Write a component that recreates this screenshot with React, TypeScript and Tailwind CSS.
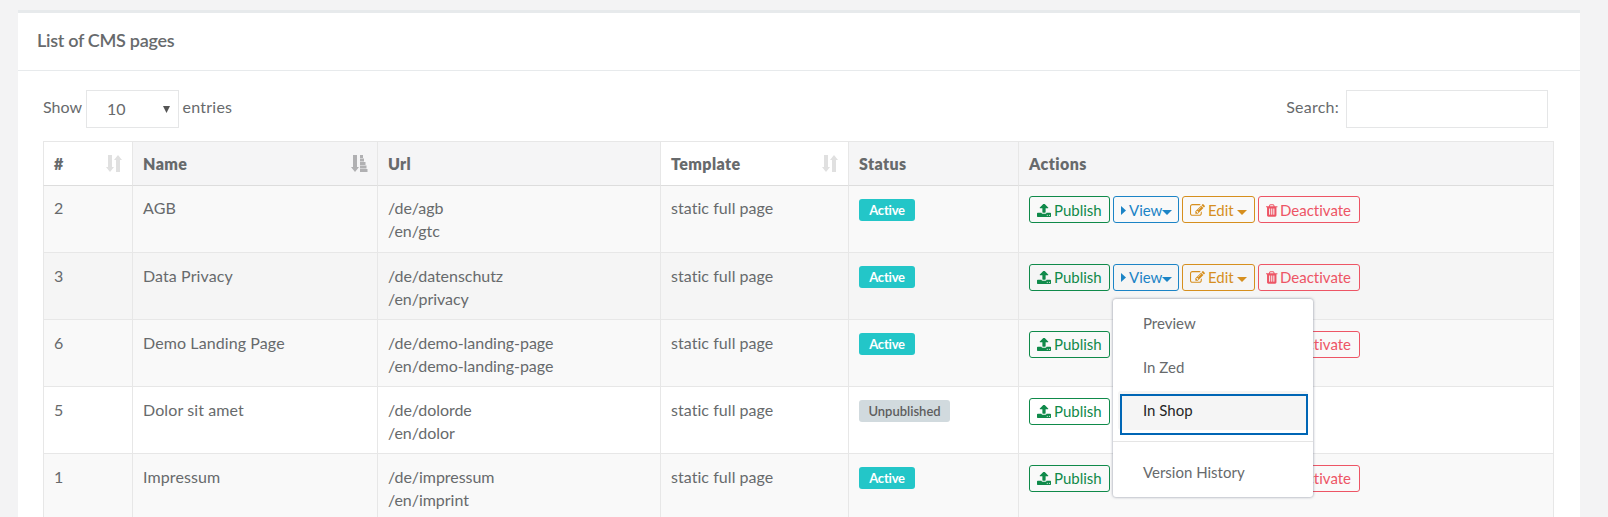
import React from "react";

const UPLOAD =
  "M1344 1472q0-26-19-45t-45-19-45 19-19 45 19 45 45 19 45-19 19-45zm256 0q0-26-19-45t-45-19-45 19-19 45 19 45 45 19 45-19 19-45zm128-224v320q0 40-28 68t-68 28h-1472q-40 0-68-28t-28-68v-320q0-40 28-68t68-28h427q21 56 70.5 92t110.5 36h256q61 0 110.5-36t70.5-92h427q40 0 68 28t28 68zm-325-648q-17 40-59 40h-256v448q0 26-19 45t-45 19h-256q-26 0-45-19t-19-45v-448h-256q-42 0-59-40-17-39 14-69l448-448q18-19 45-19t45 19l448 448q31 30 14 69z";
const PENCIL =
  "M888 1184l116-116-152-152-116 116v56h96v96h56zm440-720q-16-16-33 1l-350 350q-17 17-1 33t33-1l350-350q17-17 1-33zm80 594v190q0 119-84.5 203.5t-203.5 84.5h-832q-119 0-203.5-84.5t-84.5-203.5v-832q0-119 84.5-203.5t203.5-84.5h832q63 0 117 25 15 7 18 23 3 17-9 29l-49 49q-14 14-32 8-23-6-45-6h-832q-66 0-113 47t-47 113v832q0 66 47 113t113 47h832q66 0 113-47t47-113v-126q0-13 9-22l64-64q15-15 35-7t20 29zm-96-738l288 288-672 672h-288v-288zm444 132l-92 92-288-288 92-92q28-28 68-28t68 28l152 152q28 28 28 68t-28 68z";
const TRASH =
  "M704 1376v-704q0-14-9-23t-23-9h-64q-14 0-23 9t-9 23v704q0 14 9 23t23 9h64q14 0 23-9t9-23zm256 0v-704q0-14-9-23t-23-9h-64q-14 0-23 9t-9 23v704q0 14 9 23t23 9h64q14 0 23-9t9-23zm256 0v-704q0-14-9-23t-23-9h-64q-14 0-23 9t-9 23v704q0 14 9 23t23 9h64q14 0 23-9t9-23zm-544-992h448l-48-117q-7-9-17-11h-317q-10 2-17 11zm928 32v64q0 14-9 23t-23 9h-96v948q0 83-47 143.5t-113 60.5h-832q-66 0-113-58.5t-47-141.5v-952h-96q-14 0-23-9t-9-23v-64q0-14 9-23t23-9h309l70-167q15-37 54-63t79-26h320q40 0 79 26t54 63l70 167h309q14 0 23 9t9 23z";

function Glyph({ d, viewBox, className }: { d: string; viewBox: string; className: string }) {
  return (
    <svg viewBox={viewBox} className={`shrink-0 fill-current ${className}`}>
      <path d={d} />
    </svg>
  );
}

function CaretDown() {
  return (
    <svg viewBox="0 0 10 5" className="mt-[3px] h-[5px] w-[10px] shrink-0 fill-current">
      <path d="M0 0h10L5 5z" />
    </svg>
  );
}

function SortBoth() {
  return (
    <svg viewBox="0 0 17 17" className="h-[17px] w-[17px] fill-[#e0e0e0]">
      <path d="M2 0h4v12h2L4 17 0 12h2zM10 17h4V5h2L12 0 8 5h2z" />
    </svg>
  );
}

function SortAscending() {
  return (
    <svg viewBox="0 0 17 17" className="h-[17px] w-[17px] fill-[#b0b0b2]">
      <path d="M2 0h4v12h2L4 17 0 12h2zM9 0h3v3H9zM9 3.500h4v3H9zM9 7h5.500v3H9zM9 10.500h6.500v3H9zM9 14h7.500v3H9z" />
    </svg>
  );
}

type Header = { label: string; width: string; plain?: boolean; icon?: React.ReactNode };

const headers: Header[] = [
  { label: "#", width: "w-[90px] border-l", plain: true, icon: <SortBoth /> },
  { label: "Name", width: "w-[245px]", icon: <SortAscending /> },
  { label: "Url", width: "w-[283px]" },
  { label: "Template", width: "w-[188px]", plain: true, icon: <SortBoth /> },
  { label: "Status", width: "w-[170px]" },
  { label: "Actions", width: "w-[535px]" },
];

type Page = { id: number; name: string; urls: [string, string]; active: boolean; bg: string };

const pages: Page[] = [
  { id: 2, name: "AGB", urls: ["/de/agb", "/en/gtc"], active: true, bg: "bg-[#f9f9f9]" },
  { id: 3, name: "Data Privacy", urls: ["/de/datenschutz", "/en/privacy"], active: true, bg: "bg-[#f5f5f5]" },
  { id: 6, name: "Demo Landing Page", urls: ["/de/demo-landing-page", "/en/demo-landing-page"], active: true, bg: "bg-[#f9f9f9]" },
  { id: 5, name: "Dolor sit amet", urls: ["/de/dolorde", "/en/dolor"], active: false, bg: "bg-white" },
  { id: 1, name: "Impressum", urls: ["/de/impressum", "/en/imprint"], active: true, bg: "bg-[#f9f9f9]" },
];

function Actions({ active, first, open }: { active: boolean; first: boolean; open: boolean }) {
  const button = `flex h-[27px] items-center rounded-[3px] border pl-[7px] text-[15px] leading-none ${first ? "pt-[2px]" : "pt-0"}`;
  return (
    <div className="flex gap-[3px] whitespace-nowrap">
      <button className={`${button} w-[81px] border-[#0f8a4a] text-[#0f8a4a]`}>
        <Glyph d={UPLOAD} viewBox="64 128 1664 1536" className="mr-[3px] h-[13px] w-[14px]" />
        Publish
      </button>
      <div className="relative">
        <button className={`${button} w-[66px] border-[#1c84c6] text-[#1c84c6]`}>
          <svg viewBox="0 0 5 9" className="mr-[3px] h-[9px] w-[5px] shrink-0 fill-current">
            <path d="M0 0l5 4.500L0 9z" />
          </svg>
          View
          <CaretDown />
        </button>
        {open && <ViewMenu />}
      </div>
      <button className={`${button} w-[73px] border-[#d68f1e] text-[#d68f1e]`}>
        <Glyph d={PENCIL} viewBox="0 128 1792 1536" className="mr-[3px] h-[13px] w-[15px]" />
        Edit
        <span className="ml-[3px]">
          <CaretDown />
        </span>
      </button>
      {active && (
        <button className={`${button} w-[102px] border-[#ed5565] text-[#ed5565]`}>
          <Glyph d={TRASH} viewBox="192 128 1408 1536" className="mr-[2.500px] h-[13px] w-[11.500px]" />
          Deactivate
        </button>
      )}
    </div>
  );
}

function ViewMenu() {
  return (
    <div className="absolute top-[34.500px] left-0 z-10 h-[198px] w-[200px] rounded-[3px] bg-white text-[15px] leading-5 text-[#676a6c] shadow-[0_0_3px_rgba(86,96,117,0.7)]">
      <div className="pt-[14px] pl-[30px]">Preview</div>
      <div className="pt-6 pl-[30px]">In Zed</div>
      <div className="relative mt-[14px] mr-[5px] ml-[5px] h-[39px] rounded-[3px] bg-[#f5f5f5] pt-[9px] pl-[25px] text-[#262626]">
        In Shop
        <div className="absolute top-[3px] left-[2px] h-[41px] w-[188px] border-2 border-[#0066b5]" />
      </div>
      <div className="mt-[11px] border-t border-[#e5e5e5]" />
      <div className="pt-5 pl-[30px]">Version History</div>
    </div>
  );
}

export default function App() {
  return (
    <div className="h-[517px] overflow-hidden bg-[#f3f3f4] pt-[10px] pr-7 pl-[18px] font-['Lato',sans-serif] text-base text-[#676a6c] [font-variant-ligatures:none]">
      <section className="h-[600px] border-t-[3px] border-[#e7eaec] bg-white">
        <header className="h-[58px] border-b border-[#e7eaec] pt-[15px] pl-[19px]">
          <h1 className="text-[18px] leading-6 font-semibold tracking-[-0.3px]">List of CMS pages</h1>
        </header>
        <div className="flex h-[70px] items-start justify-between pt-[19px] pr-[32px] pl-[25px]">
          <div className="flex">
            <span className="w-[43px] pt-[5px]">Show</span>
            <div className="flex h-[38px] w-[93px] items-center justify-between border border-[#e5e6e7] pr-[8px] pl-[20px]">
              10
              <svg viewBox="0 0 7 7" className="h-[7px] w-[7px] fill-[#555]">
                <path d="M0 0h7L3.500 7z" />
              </svg>
            </div>
            <span className="pt-[5px] pl-[3.500px] tracking-[0.25px]">entries</span>
          </div>
          <label className="flex">
            <span className="pt-[5px] pr-[7px] tracking-[0.25px]">Search:</span>
            <input className="h-[38px] w-[202px] border border-[#e5e6e7] bg-white" />
          </label>
        </div>
        <table className="ml-[25px] w-[1511px] table-fixed border-separate border-spacing-0 text-left">
          <thead>
            <tr>
              {headers.map((h) => (
                <th key={h.label} className={`h-[45px] border-t border-r border-b border-[#e7e7e7] border-b-[#dddddd] p-0 font-extrabold tracking-[0.4px] ${h.width} ${h.plain ? "bg-white" : "bg-[#f5f5f6]"}`}>
                  <div className="flex items-center justify-between pr-[9px] pl-[10px]">
                    {h.label}
                    {h.icon}
                  </div>
                </th>
              ))}
            </tr>
          </thead>
          <tbody>
            {pages.map((p, i) => {
              const cell = `h-[67px] border-r border-b border-[#e7e7e7] pb-0 pr-0 pl-[10px] align-top leading-[23px] ${p.bg} ${i === 0 ? "pt-[10px]" : "pt-[11px]"}`;
              return (
                <tr key={p.id}>
                  <td className={`${cell} border-l`}>{p.id}</td>
                  <td className={`${cell} tracking-[0.1px]`}>{p.name}</td>
                  <td className={`${cell} tracking-[-0.04px]`}>
                    {p.urls[0]}
                    <br />
                    {p.urls[1]}
                  </td>
                  <td className={`${cell} tracking-[0.05px]`}>static full page</td>
                  <td className={cell}>
                    <span className={`${i === 0 ? "mt-[3px]" : "mt-[2px]"} flex h-[22px] items-center justify-center rounded-[3px] text-[13px] ${p.active ? "w-14 bg-[#23c6c8] font-bold tracking-[-0.2px] text-white" : "w-[91px] bg-[#d1dade] font-semibold text-[#5e5e5e]"}`}>
                      {p.active ? "Active" : "Unpublished"}
                    </span>
                  </td>
                  <td className={cell}>
                    <Actions active={p.active} first={i === 0} open={p.id === 3} />
                  </td>
                </tr>
              );
            })}
          </tbody>
        </table>
      </section>
    </div>
  );
}
